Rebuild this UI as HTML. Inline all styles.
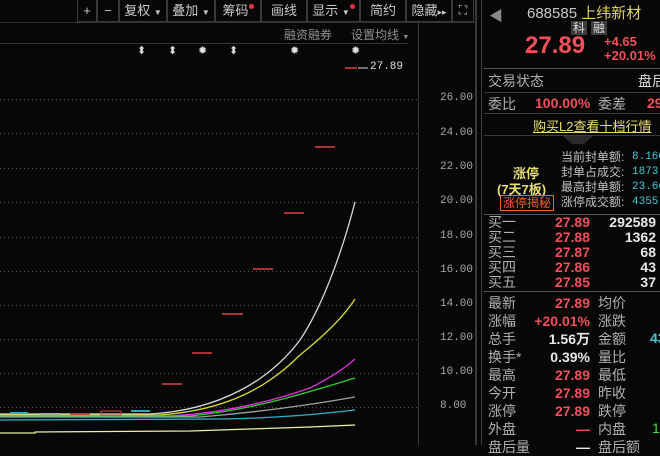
<!DOCTYPE html>
<html><head><meta charset="utf-8"><style>
*{margin:0;padding:0;box-sizing:border-box}
body{width:660px;height:445px;background:#070707;overflow:hidden;position:relative;font-family:"Liberation Sans","Noto Sans CJK SC",sans-serif;color:#c8c8c8}
div{white-space:nowrap}
.a{position:absolute}
.tb{position:absolute;top:0;height:22px;border:1px solid #3a3a3a;border-top:none;font-size:13px;color:#c8c8c8;text-align:center;line-height:21px}
.dot{display:inline-block;width:5px;height:5px;border-radius:50%;background:#f03040;vertical-align:top;margin-top:4px}
.ax{position:absolute;left:440px;font-size:11px;color:#a8a8a8;font-family:"Liberation Mono",monospace}
.r{color:#f0505a}.w{color:#e8e8e8}.c{color:#40c8d0}.g{color:#40e040}
.lb{position:absolute;left:488px;font-size:14px;color:#b0b0b0}
.v{position:absolute;font-size:14px;font-weight:bold;text-align:right}
.hl{position:absolute;left:484px;width:176px;height:1px;background:#3c3c3c}
</style></head><body>
<div class="tb" style="left:77px;width:20px">+</div>
<div class="tb" style="left:97px;width:22px">−</div>
<div class="tb" style="left:119px;width:48px">复权 <span style="font-size:8px">▼</span></div>
<div class="tb" style="left:167px;width:48px">叠加 <span style="font-size:8px">▼</span></div>
<div class="tb" style="left:215px;width:46px">筹码<span class="dot"></span></div>
<div class="tb" style="left:261px;width:46px">画线</div>
<div class="tb" style="left:307px;width:53px">显示 <span style="font-size:8px">▼</span><span class="dot"></span></div>
<div class="tb" style="left:360px;width:46px">简约</div>
<div class="tb" style="left:406px;width:46px">隐藏<span style="font-size:9px">▸▸</span></div>
<div class="tb" style="left:452px;width:22px;font-size:12px">⛶</div>
<div class="a" style="left:0;top:22px;width:476px;height:1px;background:#303030"></div>
<div class="a" style="left:284px;top:26px;font-size:12px;color:#909090">融资融券</div>
<div class="a" style="left:351px;top:26px;font-size:12px;color:#909090">设置均线 <span style="font-size:7px">▼</span></div>
<div class="a" style="left:0;top:43px;width:408px;height:1px;background:#333"></div>
<div class="a" style="left:137px;top:44px;font-size:11px;color:#ddd">
<span style="position:absolute;left:0">⬍</span><span style="position:absolute;left:31px">⬍</span><span style="position:absolute;left:61px">✹</span><span style="position:absolute;left:92px">⬍</span><span style="position:absolute;left:153px">✹</span><span style="position:absolute;left:214px">✹</span></div>
<div class="a" style="left:370px;top:61px;font-size:11px;color:#ddd;font-family:'Liberation Mono',monospace">27.89</div>
<div class="a" style="left:418px;top:22px;width:1px;height:423px;background:#3a3a3a"></div>
<div class="a" style="left:475px;top:0;width:2px;height:445px;background:#3a3a3a"></div>
<div class="a" style="left:481px;top:0;width:1px;height:445px;background:#3a3a3a"></div>
<svg class="a" style="left:0;top:0" width="476" height="445">
<g stroke="#555" stroke-dasharray="1,3" stroke-width="1">
<line x1="0" y1="99.5" x2="418" y2="99.5"/><line x1="0" y1="133.5" x2="418" y2="133.5"/><line x1="0" y1="168.5" x2="418" y2="168.5"/><line x1="0" y1="202.5" x2="418" y2="202.5"/><line x1="0" y1="237.5" x2="418" y2="237.5"/><line x1="0" y1="271.5" x2="418" y2="271.5"/><line x1="0" y1="305.5" x2="418" y2="305.5"/><line x1="0" y1="339.5" x2="418" y2="339.5"/><line x1="0" y1="373.5" x2="418" y2="373.5"/><line x1="0" y1="407.5" x2="418" y2="407.5"/>
</g>
<g stroke="#e04040" stroke-width="1.5">
<line x1="162" y1="384" x2="182" y2="384"/><line x1="192" y1="353" x2="212" y2="353"/><line x1="222" y1="314" x2="243" y2="314"/><line x1="253" y1="269" x2="273" y2="269"/><line x1="284" y1="213" x2="304" y2="213"/><line x1="315" y1="147" x2="335" y2="147"/><line x1="345" y1="68" x2="357" y2="68"/>
</g>
<polyline points="358,68 368,68" stroke="#ddd" fill="none"/>
<g fill="none" stroke-width="1.3">
<path d="M0,414 L150,414 C220,410 270,380 300,340 C320,310 340,260 355,202" stroke="#d8d8d8"/>
<path d="M0,415 L160,415 C230,410 270,385 300,355 C325,335 345,315 355,299" stroke="#d8d830"/>
<path d="M0,416 L170,416 C240,412 290,395 310,388 C330,378 345,368 355,359" stroke="#e030e0"/>
<path d="M0,416 L190,416 C250,410 300,395 355,378" stroke="#30d030"/>
<path d="M0,417 L200,417 C260,412 310,405 355,397" stroke="#a0a0a0"/>
<path d="M0,420 L220,419 C280,418 320,414 355,410" stroke="#30b0d0"/>
<path d="M0,433 L35,433 L35,432 L190,431 L250,429 L310,427 L355,425" stroke="#f0f0a0"/>
</g>
<g stroke-width="2"><line x1="10" y1="413" x2="28" y2="413" stroke="#30b0b0"/><line x1="40" y1="414" x2="60" y2="414" stroke="#aaa"/><line x1="70" y1="414" x2="90" y2="414" stroke="#c04050"/><rect x="101" y="411" width="20" height="4" stroke="#d04050" fill="none" stroke-width="1"/><line x1="131" y1="411" x2="150" y2="411" stroke="#40a0b0"/></g>
</svg>
<div class="ax" style="top:92px">26.00</div><div class="ax" style="top:127px">24.00</div><div class="ax" style="top:161px">22.00</div><div class="ax" style="top:195px">20.00</div><div class="ax" style="top:230px">18.00</div><div class="ax" style="top:264px">16.00</div><div class="ax" style="top:298px">14.00</div><div class="ax" style="top:332px">12.00</div><div class="ax" style="top:366px">10.00</div><div class="ax" style="top:400px">8.00</div>
<div class="a" style="left:489px;top:6px;font-size:14px;color:#888">◀</div>
<div class="a" style="left:527px;top:2px;font-size:15px;color:#c8c8c8">688585 <span style="color:#e0d060">上纬新材</span></div>
<div class="a" style="left:571px;top:21px;font-size:12px;background:#3c3c3c;color:#ddd;padding:0 2px;line-height:14px">科</div>
<div class="a" style="left:591px;top:21px;font-size:12px;background:#3c3c3c;color:#ddd;padding:0 2px;line-height:14px">融</div>
<div class="a r" style="left:525px;top:32px;font-size:24px;font-weight:bold">27.89</div>
<div class="a r" style="left:604px;top:35px;font-size:13px;font-weight:bold;line-height:14px">+4.65<br>+20.01%</div>
<div class="hl" style="top:68px;background:#555"></div>
<div class="lb" style="top:71px">交易状态</div><div class="lb" style="left:638px;top:71px;color:#ddd">盘后</div>
<div class="hl" style="top:92px"></div>
<div class="lb" style="top:94px">委比</div><div class="v r" style="left:535px;top:95px">100.00%</div><div class="lb" style="left:598px;top:94px">委差</div><div class="v r" style="left:647px;top:95px">29</div>
<div class="hl" style="top:113px"></div>
<div class="a" style="left:533px;top:116px;font-size:13px;color:#e8e070;text-decoration:underline">购买L2查看十档行情</div>
<div class="hl" style="top:135px"></div>
<div class="a" style="left:563px;top:136px;width:30px;height:8px;background:#2a2a2a;clip-path:polygon(0 0,100% 0,70% 100%,30% 100%)"></div>
<div class="a" style="left:513px;top:163px;font-size:13px;font-weight:bold;color:#e8e070">涨停</div>
<div class="a" style="left:497px;top:179px;font-size:13px;font-weight:bold;color:#e8e070">(7天7板)</div>
<div class="a" style="left:500px;top:195px;font-size:12px;color:#f06030;border:1px solid #f06030;padding:0 2px;line-height:14px">涨停揭秘</div>
<div class="a" style="left:561px;top:150px;font-size:12px;color:#c0c0c0;line-height:15px">当前封单额:<br>封单占成交:<br>最高封单额:<br>涨停成交额:</div>
<div class="a c" style="left:632px;top:150px;font-size:11px;line-height:15px;font-family:'Liberation Mono',monospace">8.160<br>1873.<br>23.66<br>4355.</div>
<div class="hl" style="top:214px;background:#555"></div>
<div class="a" style="left:488px;top:215px;font-size:14px;color:#b0b0b0;line-height:15px">买一<br>买二<br>买三<br>买四<br>买五</div>
<div class="v r" style="left:540px;top:215px;width:50px;line-height:15px">27.89<br>27.88<br>27.87<br>27.86<br>27.85</div>
<div class="v w" style="left:600px;top:215px;width:56px;line-height:15px">292589<br>1362<br>68<br>43<br>37</div>
<div class="hl" style="top:291px;background:#555"></div>
<div class="a" style="left:488px;top:294px;font-size:14px;color:#b0b0b0;line-height:18px">最新<br>涨幅<br>总手<br>换手*<br>最高<br>今开<br>涨停<br>外盘<br>盘后量</div>
<div class="v" style="left:520px;top:294px;width:70px;line-height:18px"><span class="r">27.89</span><br><span class="r">+20.01%</span><br><span class="w">1.56万</span><br><span class="w">0.39%</span><br><span class="r">27.89</span><br><span class="r">27.89</span><br><span class="r">27.89</span><br><span class="r">—</span><br><span class="w">—</span></div>
<div class="a" style="left:598px;top:294px;font-size:14px;color:#b0b0b0;line-height:18px">均价<br>涨跌<br>金额<br>量比<br>最低<br>昨收<br>跌停<br>内盘<br>盘后额</div>
<div class="a c" style="left:650px;top:330px;font-size:14px;font-weight:bold">43</div>
<div class="a g" style="left:652px;top:420px;font-size:14px">1</div>
</body></html>
